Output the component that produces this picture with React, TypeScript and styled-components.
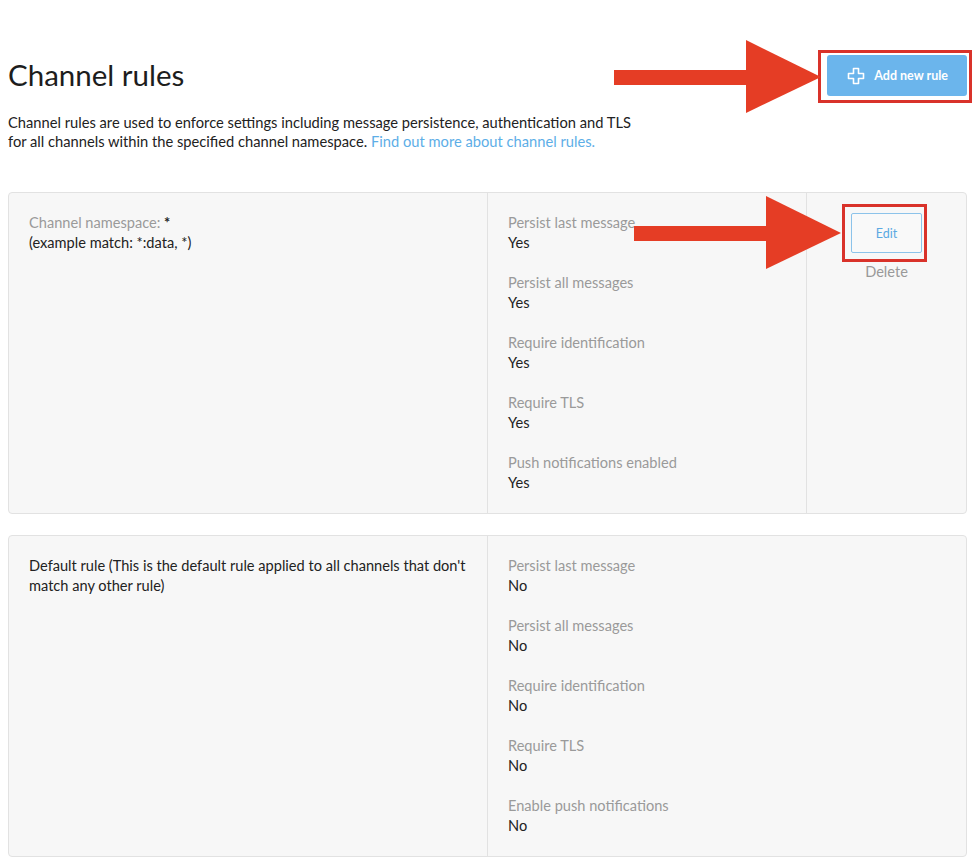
import * as React from 'react';
import styled, { createGlobalStyle } from 'styled-components';

interface Setting {
    label: string;
    value: string;
}

interface Rule {
    id: string;
    namespace?: string;
    example?: string;
    description?: string;
    settings: Setting[];
    editable: boolean;
}

const rules: Rule[] = [
    {
        id: 'wildcard',
        namespace: '*',
        example: '*:data, *',
        settings: [
            { label: 'Persist last message', value: 'Yes' },
            { label: 'Persist all messages', value: 'Yes' },
            { label: 'Require identification', value: 'Yes' },
            { label: 'Require TLS', value: 'Yes' },
            { label: 'Push notifications enabled', value: 'Yes' },
        ],
        editable: true,
    },
    {
        id: 'default',
        description: "Default rule (This is the default rule applied to all channels that don't match any other rule)",
        settings: [
            { label: 'Persist last message', value: 'No' },
            { label: 'Persist all messages', value: 'No' },
            { label: 'Require identification', value: 'No' },
            { label: 'Require TLS', value: 'No' },
            { label: 'Enable push notifications', value: 'No' },
        ],
        editable: false,
    },
];

const PlusIcon = () => (
    <svg width="18" height="18" viewBox="0 0 18 18" fill="none">
        <path d="M6.5 1.5h5v5h5v5h-5v5h-5v-5h-5v-5h5z" stroke="#fff" strokeWidth="1.6" strokeLinejoin="round" />
    </svg>
);

const Arrow = ({ left, top }: { left: number; top: number }) => (
    <ArrowSvg style={{ left, top }} width="208" height="74" viewBox="0 0 208 74">
        <rect x="0" y="30" width="136" height="15" fill="#e53d25" />
        <polygon points="132,0 207,37 132,73" fill="#e53d25" />
    </ArrowSvg>
);

const RuleDescription = ({ rule }: { rule: Rule }) => {
    if (rule.namespace) {
        return <Description>
            <Muted>Channel namespace: </Muted><strong>{rule.namespace}</strong><br />
            (example match: {rule.example})
        </Description>
    }
    return <Description>{rule.description}</Description>
};

export default function App() {
    return <Page>
        <GlobalStyle />
        <Header>
            <Title>Channel rules</Title>
            <Highlight $inset="-5px -5px -7px -9px">
                <AddButton><PlusIcon />Add new rule</AddButton>
            </Highlight>
        </Header>
        <Intro>
            Channel rules are used to enforce settings including message persistence, authentication and TLS<br />
            for all channels within the specified channel namespace. <Link href="#">Find out more about channel rules.</Link>
        </Intro>
        <RuleList>
            {rules.map(rule => (
                <Card key={rule.id}>
                    <RuleDescription rule={rule} />
                    <Settings $wide={!rule.editable}>
                        {rule.settings.map(s => (
                            <SettingItem key={s.label}>
                                <Muted>{s.label}</Muted>
                                <Value>{s.value}</Value>
                            </SettingItem>
                        ))}
                    </Settings>
                    {rule.editable &&
                        <Actions>
                            <Highlight $inset="-9px -5px -9px -9px">
                                <EditButton>Edit</EditButton>
                            </Highlight>
                            <DeleteLink>Delete</DeleteLink>
                        </Actions>}
                </Card>
            ))}
        </RuleList>
        <Arrow left={614} top={40} />
        <Arrow left={634} top={196} />
    </Page>
}

const GlobalStyle = createGlobalStyle`
body {
margin: 0;
background: #fff;
font-family: Lato, "Open Sans", sans-serif;
color: #222;
}
`

const Page = styled.div`
position: relative;
padding: 55px 7px 10px 8px;
`

const Header = styled.div`
display: flex;
justify-content: space-between;
align-items: center;
height: 41px;
`

const Title = styled.h1`
margin: 0 0 2px;
font-size: 29.5px;
font-weight: 400;
color: #1d1d1d;
`

const Highlight = styled.div<{ $inset: string }>`
position: relative;

&::after {
content: '';
position: absolute;
inset: ${p => p.$inset};
border: 3px solid #d9322a;
pointer-events: none;
}
`

const AddButton = styled.button`
display: flex;
align-items: center;
gap: 9px;
height: 41px;
padding: 0 19px 0 20px;
background: #6bb5ec;
border: none;
border-radius: 3px;
color: #fff;
font-family: inherit;
font-size: 12.5px;
font-weight: 700;
`

const Intro = styled.p`
margin: 17px 0 0;
font-size: 14.7px;
line-height: 19px;
`

const Link = styled.a`
color: #5daee7;
text-decoration: none;
`

const RuleList = styled.div`
display: flex;
flex-direction: column;
gap: 21px;
margin-top: 41px;
`

const Card = styled.div`
display: grid;
grid-template-columns: 479px 319px 1fr;
background: #f7f7f7;
border: 1px solid #e2e2e2;
border-radius: 4px;
font-size: 14.6px;
line-height: 20px;
`

const Description = styled.div`
padding: 20px;
border-right: 1px solid #e2e2e2;
`

const Settings = styled.div<{ $wide: boolean }>`
display: flex;
flex-direction: column;
gap: 20px;
padding: 20px;
grid-column: ${p => p.$wide ? 'span 2' : 'auto'};
${p => p.$wide ? '' : 'border-right: 1px solid #e2e2e2;'}
`

const SettingItem = styled.div`
display: flex;
flex-direction: column;
`

const Muted = styled.span`
color: #9a9a9a;
`

const Value = styled.span`
color: #222;
`

const Actions = styled.div`
display: flex;
flex-direction: column;
align-items: center;
padding-top: 20px;
`

const EditButton = styled.button`
width: 71px;
height: 40px;
background: #f9f9f9;
border: 1px solid #8cc3ea;
border-radius: 2px;
color: #5ba9e2;
font-family: inherit;
font-size: 12.5px;
`

const DeleteLink = styled.div`
margin-top: 9px;
color: #999;
`

const ArrowSvg = styled.svg`
position: absolute;
pointer-events: none;
`
